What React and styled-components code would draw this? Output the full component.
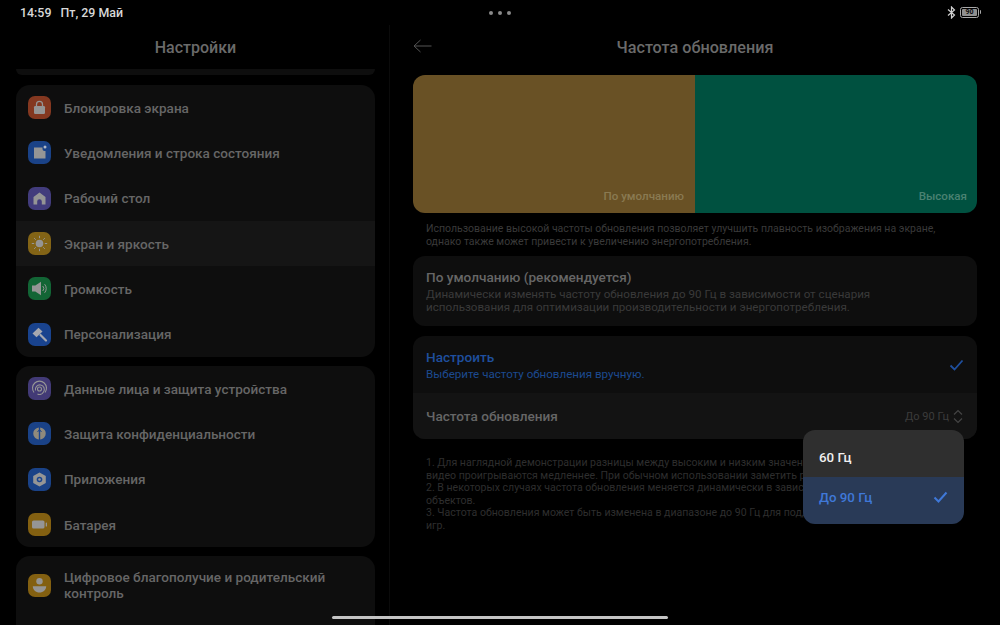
import React from "react";
import styled, { createGlobalStyle } from "styled-components";

const Global = createGlobalStyle`
  html, body { margin: 0; padding: 0; background: #000; }
  body { font-family: Roboto, "Liberation Sans", sans-serif; }
  #root { width: 1000px; height: 625px; overflow: hidden; }
`;

const Screen = styled.div`
  position: relative; width: 1000px; height: 625px; background: #000;
  display: flex; flex-direction: column; overflow: hidden;
`;
const StatusBar = styled.div`
  height: 25px; flex: none; display: grid; grid-template-columns: 1fr auto 1fr;
  align-items: center; padding: 0 20px; color: #d8d8d8;
  font-size: 12.4px; font-weight: 500;
`;
const Clock = styled.div` display: flex; gap: 9px; `;
const Dots = styled.div`
  display: flex; gap: 5px;
  i { width: 4px; height: 4px; border-radius: 50%; background: #8a8a8a; display: block; }
`;
const StatusIcons = styled.div` display: flex; justify-content: flex-end; align-items: center; gap: 4px; `;
const Battery = styled.div`
  position: relative; width: 17px; height: 9px; border: 1px solid #a8a8a8; border-radius: 2.5px;
  display: flex; align-items: center; justify-content: center; margin-right: 1px;
  &::after { content: ""; position: absolute; right: -3px; top: 2px; width: 1.5px; height: 4px; background: #a8a8a8; border-radius: 0 1px 1px 0; }
`;
const BatteryLevel = styled.span`
  width: 15px; height: 7px; border-radius: 1px; background: #8f8f8f; color: #0a0a0a;
  font-size: 7px; line-height: 7px; font-weight: 700; text-align: center; display: block;
`;
const Panes = styled.div` flex: 1; display: flex; min-height: 0; `;
const LeftPane = styled.div`
  width: 390px; flex: none; border-right: 1px solid #0b0b0b; padding: 0 14px 0 16px;
  box-sizing: border-box; display: flex; flex-direction: column; overflow: hidden;
`;
const RightPane = styled.div`
  flex: 1; min-width: 0; padding: 0 23px; display: flex; flex-direction: column;
`;
const PaneTitle = styled.div`
  height: 44px; flex: none; display: flex; align-items: center; justify-content: center;
  color: #6a6a6a; font-size: ${p => p.$fs || 16}px; font-weight: 500; position: relative;
`;
const BackIcon = styled.svg` position: absolute; left: 0; top: 14px; `;
const CardStub = styled.div`
  height: 6px; flex: none; background: #0e0e0e; border-radius: 0 0 12px 12px; margin-bottom: 10px;
`;
const Card = styled.div`
  flex: none; background: #0e0e0e; border-radius: 14px; overflow: hidden; margin-bottom: 9px;
`;
const LastCard = styled(Card)` padding-bottom: 30px; margin-bottom: 0; `;
const Row = styled.div`
  height: ${p => p.$h || 45.33}px; display: flex; align-items: center; gap: 13px; padding: 0 12px;
  background: ${p => (p.$active ? "#151515" : "transparent")};
  color: #666; font-size: 13.55px; line-height: 16px; font-weight: 500;
`;
const IconBox = styled.div`
  width: 23px; height: 23px; flex: none; border-radius: 7px; background: ${p => p.$bg};
  display: flex; align-items: center; justify-content: center;
`;
const Preview = styled.div`
  height: 138px; flex: none; border-radius: 12px; overflow: hidden; display: flex; margin-top: 6px;
`;
const Half = styled.div`
  width: ${p => p.$w}px; flex: none; background: ${p => p.$bg}; color: ${p => p.$c};
  display: flex; align-items: flex-end; justify-content: flex-end; padding: 0 ${p => p.$pr}px 10px 0; box-sizing: border-box;
  font-size: 11.6px; line-height: 14px; font-weight: 500;
`;
const Hint = styled.div`
  color: #3a3a3a; font-size: 10.5px; line-height: 13px; padding: 9px 13px 8px; white-space: nowrap;
`;
const OptionCard = styled.div`
  flex: none; background: #0e0e0e; border-radius: 12px; margin-bottom: 10px; overflow: hidden;
`;
const OptionRow = styled.div`
  height: ${p => p.$h}px; display: flex; align-items: center; justify-content: space-between; padding: 0 13px;
  box-sizing: border-box; background: ${p => p.$bg || "transparent"};
`;
const OptionText = styled.div` display: flex; flex-direction: column; `;
const OptionTitle = styled.div`
  color: ${p => p.$blue ? "#1f4f9e" : "#666"}; font-size: 13.6px; line-height: 16px; font-weight: 500;
`;
const OptionDesc = styled.div`
  color: ${p => p.$blue ? "#1c4a90" : "#3a3a3a"}; font-size: 11.6px; line-height: 13px; margin-top: 3px; white-space: nowrap;
`;
const Value = styled.div`
  display: flex; align-items: center; gap: 3px; color: #3c3c3c; font-size: 11px;
`;
const Notes = styled.div`
  color: #2e2e2e; font-size: 10.55px; line-height: 12.55px; padding: 8px 13px 0; white-space: nowrap;
`;
const Popup = styled.div`
  position: absolute; left: 803px; top: 430px; width: 161px; border-radius: 12px; overflow: hidden;
  display: flex; flex-direction: column;
`;
const PopupItem = styled.div`
  height: 47px; box-sizing: border-box; display: flex; align-items: center; justify-content: space-between;
  padding: ${p => p.$sel ? "0 16px 7px 16px" : "7px 16px 0 16px"}; font-size: 13.3px; font-weight: 500;
  background: ${p => p.$sel ? "#293a57" : "#2f2f2f"}; color: ${p => p.$sel ? "#3f78d8" : "#f0f0f0"};
`;
const HomeBar = styled.div`
  position: absolute; left: 332px; top: 616px; width: 336px; height: 3px; border-radius: 2px; background: #c4c4c4;
`;

const g = "#959595";
const Ico = ({ children }) => (
  <svg width="17" height="17" viewBox="0 0 17 17" fill={g}>{children}</svg>
);
const icons = {
  lock: <Ico><rect x="3" y="7" width="11" height="8" rx="1.3" /><path d="M5.5 7.5V5.3a3 3 0 0 1 6 0v2.2" fill="none" stroke={g} strokeWidth="1.3" /></Ico>,
  note: <Ico><path d="M3 3.5h8.5v1.5a2 2 0 0 0 2 2H14.5v7.5h-11.5z" /><circle cx="14" cy="3" r="1.5" fill="#b0b8c8" /></Ico>,
  home: <Ico><path d="M8.5 2.5 14.5 7v7.5h-3.7v-3a2.3 2.3 0 0 0-4.6 0v3H2.5V7z" /></Ico>,
  sun: <Ico><circle cx="8.5" cy="8.5" r="3.8" /><path d="M8.5 1.2v1.6M8.5 14.2v1.6M1.2 8.5h1.6M14.2 8.5h1.6M3.4 3.4l1.1 1.1M12.5 12.5l1.1 1.1M3.4 13.6l1.1-1.1M12.5 4.5l1.1-1.1" stroke={g} strokeWidth="1" strokeLinecap="round" /></Ico>,
  vol: <Ico><path d="M1 5.5h3.3L10 1.8v13.4L4.3 11.5H1z" /><path d="M11.8 6a3.8 3.8 0 0 1 0 5M13.6 4.2a6.5 6.5 0 0 1 0 8.6" fill="none" stroke={g} strokeWidth="1" /></Ico>,
  brush: <Ico><path d="M1.5 7.5 7.5 1.8 11.5 5.6 5.5 11.3z" fill="#a5a8b0" /><path d="M9.5 9 15 14.5" fill="none" stroke="#a5a8b0" strokeWidth="2.2" strokeLinecap="round" /></Ico>,
  face: <Ico><g fill="none" stroke={g} strokeWidth="1.1"><path d="M3 12.5A7 7 0 1 1 14 12.5" /><path d="M4.5 10.5a4.5 4.5 0 1 1 8 1.5 4.5 4.5 0 0 1-6 2" /><circle cx="8.5" cy="9" r="2" /></g></Ico>,
  shield: <Ico><path d="M7.8 2.5v12C4.5 14 2.3 11.5 2.3 8.5c0-2.7 1.2-4.7 5.5-6z" fill="#8f8a7c" /><path d="M9.2 2.5v12c3.3-.5 5.5-3 5.5-6 0-2.7-1.2-4.7-5.5-6z" fill="#8f8a7c" /><path d="M6.5 7 8.5 4.5l2 2.5M8.5 5v8" fill="none" stroke="#1a4590" strokeWidth="1" /></Ico>,
  apps: <Ico><path d="M8.5 1.5 14.8 5v7l-6.3 3.5L2.2 12V5z" /><circle cx="8.5" cy="8.5" r="2.8" fill="#1a4590" /><circle cx="8.5" cy="8.5" r="1.3" /></Ico>,
  batt: <Ico><rect x="1" y="4.5" width="12.5" height="8" rx="1.6" /><rect x="14.7" y="6.5" width="1.3" height="4" rx=".6" /></Ico>,
  well: <Ico><circle cx="8.5" cy="4.3" r="3.2" /><path d="M1.8 9.2h13.4c0 3.7-3 6.3-6.7 6.3s-6.7-2.6-6.7-6.3z" /></Ico>,
};

const group1 = [
  ["Блокировка экрана", "#843820", "lock"],
  ["Уведомления и строка состояния", "#1a4287", "note"],
  ["Рабочий стол", "#423c7c", "home"],
  ["Экран и яркость", "#836416", "sun", true],
  ["Громкость", "#126535", "vol"],
  ["Персонализация", "#19438e", "brush"],
];
const group2 = [
  ["Данные лица и защита устройства", "#423a76", "face"],
  ["Защита конфиденциальности", "#1a4287", "shield"],
  ["Приложения", "#1a4287", "apps"],
  ["Батарея", "#836011", "batt"],
];

const SettingRow = ({ item, h }) => (
  <Row $active={item[3]} $h={h}>
    <IconBox $bg={item[1]}>{icons[item[2]]}</IconBox>
    <span>{item[0]}</span>
  </Row>
);

export default function App() {
  return (
    <Screen>
      <Global />
      <StatusBar>
        <Clock><span>14:59</span><span>Пт, 29 Май</span></Clock>
        <Dots><i /><i /><i /></Dots>
        <StatusIcons>
          <svg width="9" height="13" viewBox="0 0 9 13" fill="none" stroke="#d0d0d0" strokeWidth="1.2">
            <path d="M1 3.5 7.5 9l-3 3V1l3 3L1 9.5" />
          </svg>
          <Battery><BatteryLevel>90</BatteryLevel></Battery>
        </StatusIcons>
      </StatusBar>
      <Panes>
        <LeftPane>
          <PaneTitle>Настройки</PaneTitle>
          <CardStub />
          <Card>{group1.map(i => <SettingRow key={i[0]} item={i} />)}</Card>
          <Card>{group2.map(i => <SettingRow key={i[0]} item={i} />)}</Card>
          <LastCard>
            <SettingRow h={58} item={["Цифровое благополучие и родительский контроль", "#836011", "well"]} />
          </LastCard>
        </LeftPane>
        <RightPane>
          <PaneTitle $fs={16.2}>
            <BackIcon width="20" height="14" viewBox="0 0 20 14" fill="none" stroke="#555" strokeWidth="1">
              <path d="M18.5 7H1M7.5 1 1 7l6.5 6" />
            </BackIcon>
            Частота обновления
          </PaneTitle>
          <Preview>
            <Half $w={282} $bg="#695125" $c="#8a7a52" $pr={11}>По умолчанию</Half>
            <Half $w={282} $bg="#005140" $c="#4a8272" $pr={10}>Высокая</Half>
          </Preview>
          <Hint>
            Использование высокой частоты обновления позволяет улучшить плавность изображения на экране,<br />
            однако также может привести к увеличению энергопотребления.
          </Hint>
          <OptionCard>
            <OptionRow $h={70}>
              <OptionText>
                <OptionTitle>По умолчанию (рекомендуется)</OptionTitle>
                <OptionDesc>
                  Динамически изменять частоту обновления до 90 Гц в зависимости от сценария<br />
                  использования для оптимизации производительности и энергопотребления.
                </OptionDesc>
              </OptionText>
            </OptionRow>
          </OptionCard>
          <OptionCard>
            <OptionRow $h={57}>
              <OptionText>
                <OptionTitle $blue>Настроить</OptionTitle>
                <OptionDesc $blue>Выберите частоту обновления вручную.</OptionDesc>
              </OptionText>
              <svg width="15" height="12" viewBox="0 0 15 12" fill="none" stroke="#1f4f9e" strokeWidth="1.8">
                <path d="M1.5 6.5 5.5 10.5 13.5 1.5" />
              </svg>
            </OptionRow>
            <OptionRow $h={46} $bg="#131313">
              <OptionTitle>Частота обновления</OptionTitle>
              <Value>
                До 90 Гц
                <svg width="12" height="15" viewBox="0 0 12 15" fill="none" stroke="#444" strokeWidth="1.2">
                  <path d="M2 5.5 6 1.5l4 4M2 9.5l4 4 4-4" />
                </svg>
              </Value>
            </OptionRow>
          </OptionCard>
          <Notes>
            1. Для наглядной демонстрации разницы между высоким и низким значением частоты<br />
            видео проигрываются медленнее. При обычном использовании заметить разницу<br />
            2. В некоторых случаях частота обновления меняется динамически в зависимости от<br />
            объектов.<br />
            3. Частота обновления может быть изменена в диапазоне до 90 Гц для поддерживаемых<br />
            игр.
          </Notes>
        </RightPane>
      </Panes>
      <Popup>
        <PopupItem>60 Гц</PopupItem>
        <PopupItem $sel>
          До 90 Гц
          <svg width="15" height="12" viewBox="0 0 15 12" fill="none" stroke="#3f78d8" strokeWidth="2">
            <path d="M1.5 6.5 5.5 10.5 13.5 1.5" />
          </svg>
        </PopupItem>
      </Popup>
      <HomeBar />
    </Screen>
  );
}
